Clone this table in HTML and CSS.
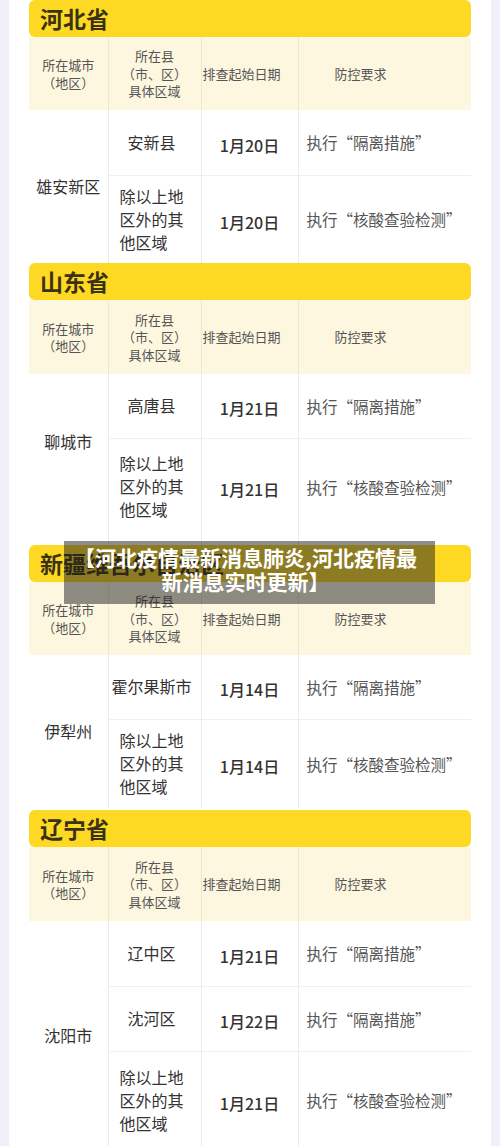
FILE: index.html
```html
<!DOCTYPE html>
<html lang="zh-CN">
<head>
<meta charset="utf-8">
<title>河北疫情最新消息</title>
<link rel="stylesheet" href="styles.css">
</head>
<body>
<div class="page">
  <div class="card">
    <section class="prov">
      <h2 class="prov-title">河北省</h2>
      <table class="grid">
        <colgroup><col class="c1"><col class="c2"><col class="c3"><col class="c4"></colgroup>
        <tr class="head h73">
          <th class="hc">所在城市<br>（地区）</th>
          <th class="hc">所在县<br>（市、区）<br>具体区域</th>
          <th class="hd">排查起始日期</th>
          <th class="hr">防控要求</th>
        </tr>
        <tr class="h65">
          <td class="city" rowspan="2">雄安新区</td>
          <td class="area"><span>安新县</span></td>
          <td class="date">1月20日</td>
          <td class="req">执行“隔离措施”</td>
        </tr>
        <tr class="h88 sep">
          <td class="area"><span>除以上地<br>区外的其<br>他区域</span></td>
          <td class="date">1月20日</td>
          <td class="req">执行“核酸查验检测”</td>
        </tr>
      </table>
    </section>

    <section class="prov">
      <h2 class="prov-title">山东省</h2>
      <table class="grid">
        <colgroup><col class="c1"><col class="c2"><col class="c3"><col class="c4"></colgroup>
        <tr class="head h74">
          <th class="hc">所在城市<br>（地区）</th>
          <th class="hc">所在县<br>（市、区）<br>具体区域</th>
          <th class="hd">排查起始日期</th>
          <th class="hr">防控要求</th>
        </tr>
        <tr class="h64">
          <td class="city lift" rowspan="2">聊城市</td>
          <td class="area"><span>高唐县</span></td>
          <td class="date">1月21日</td>
          <td class="req">执行“隔离措施”</td>
        </tr>
        <tr class="h107 sep tall">
          <td class="area"><span>除以上地<br>区外的其<br>他区域</span></td>
          <td class="date">1月21日</td>
          <td class="req">执行“核酸查验检测”</td>
        </tr>
      </table>
    </section>

    <section class="prov gap">
      <h2 class="prov-title">新疆维吾尔自治区</h2>
      <table class="grid">
        <colgroup><col class="c1"><col class="c2"><col class="c3"><col class="c4"></colgroup>
        <tr class="head h73">
          <th class="hc">所在城市<br>（地区）</th>
          <th class="hc">所在县<br>（市、区）<br>具体区域</th>
          <th class="hd">排查起始日期</th>
          <th class="hr">防控要求</th>
        </tr>
        <tr class="h64">
          <td class="city" rowspan="2">伊犁州</td>
          <td class="area"><span>霍尔果斯市</span></td>
          <td class="date">1月14日</td>
          <td class="req">执行“隔离措施”</td>
        </tr>
        <tr class="h89 sep">
          <td class="area"><span>除以上地<br>区外的其<br>他区域</span></td>
          <td class="date">1月14日</td>
          <td class="req">执行“核酸查验检测”</td>
        </tr>
      </table>
    </section>

    <section class="prov">
      <h2 class="prov-title">辽宁省</h2>
      <table class="grid">
        <colgroup><col class="c1"><col class="c2"><col class="c3"><col class="c4"></colgroup>
        <tr class="head h74">
          <th class="hc">所在城市<br>（地区）</th>
          <th class="hc">所在县<br>（市、区）<br>具体区域</th>
          <th class="hd">排查起始日期</th>
          <th class="hr">防控要求</th>
        </tr>
        <tr class="h65">
          <td class="city" rowspan="3">沈阳市</td>
          <td class="area"><span>辽中区</span></td>
          <td class="date">1月21日</td>
          <td class="req">执行“隔离措施”</td>
        </tr>
        <tr class="h65 sep">
          <td class="area"><span>沈河区</span></td>
          <td class="date">1月22日</td>
          <td class="req">执行“隔离措施”</td>
        </tr>
        <tr class="h98 sep">
          <td class="area"><span>除以上地<br>区外的其<br>他区域</span></td>
          <td class="date">1月21日</td>
          <td class="req">执行“核酸查验检测”</td>
        </tr>
      </table>
    </section>
  </div>

  <div class="caption">【河北疫情最新消息肺炎,河北疫情最<br>新消息实时更新】</div>
</div>
</body>
</html>
```

FILE: styles.css
```css
html, body {
  margin: 0;
  padding: 0;
}
body {
  background: #eff0fa;
  font-family: "Noto Sans CJK SC", "Noto Sans", sans-serif;
  color: #333;
}
.page {
  position: relative;
  width: 500px;
  height: 1146px;
  overflow: hidden;
}
.card {
  margin: 0 9px;
  background: #fff;
  padding: 0 20px;
  height: 1146px;
}
.prov {
  margin: 0;
}
.prov.gap {
  margin-bottom: 2px;
}
.prov-title {
  margin: 0;
  height: 37px;
  line-height: 37px;
  background: #fdd924;
  border-radius: 6px;
  padding-left: 11px;
  font-size: 23px;
  font-weight: 700;
  color: #3b3214;
  white-space: nowrap;
  overflow: hidden;
}
.grid {
  width: 442px;
  table-layout: fixed;
  border-collapse: collapse;
  border-spacing: 0;
}
.c1 { width: 79px; }
.c2 { width: 93px; }
.c3 { width: 97px; }
.c4 { width: 173px; }

.grid th, .grid td {
  padding: 0;
  vertical-align: middle;
  border-left: 1px solid #ebebeb;
}
.grid th:first-child, .grid td.city {
  border-left: none;
}
.head {
  background: #fdf7e0;
}
.grid .head th {
  font-size: 13px;
  font-weight: 400;
  line-height: 17.5px;
  color: #555;
  border-left-color: #efe8cf;
}
.grid .hc { text-align: center; }
.grid .hd { text-align: left; padding-left: 1px; white-space: nowrap; }
.grid .hr { text-align: left; padding-left: 36px; }

.h64 { height: 64px; }
.h65 { height: 65px; }
.h73 { height: 73px; }
.h74 { height: 74px; }
.h88 { height: 88px; }
.h89 { height: 89px; }
.h98 { height: 98px; }
.h107 { height: 107px; }

.grid .sep td {
  border-top: 1px solid #f0f0f0;
}
.grid .tall td {
  padding-bottom: 10px;
}
.grid .city {
  text-align: center;
  font-size: 16px;
  line-height: 23px;
  color: #333;
}
.grid .city.lift {
  padding-bottom: 36px;
}
.grid .area {
  text-align: center;
  font-size: 16px;
  line-height: 23px;
  color: #333;
  padding-right: 6px;
}
.area span {
  display: inline-block;
  text-align: left;
  white-space: nowrap;
}
.grid .date {
  text-align: center;
  font-size: 16px;
  font-weight: 500;
  color: #333;
  padding-top: 5px;
}
.grid .req {
  padding-left: 8px;
  font-size: 15.5px;
  color: #555;
  white-space: nowrap;
  font-feature-settings: "fwid";
}

.caption {
  position: absolute;
  left: 64px;
  top: 541px;
  width: 371px;
  height: 63px;
  box-sizing: border-box;
  padding-top: 4px;
  padding-right: 8px;
  background: rgba(30, 30, 30, 0.5);
  color: #fff;
  font-size: 21px;
  font-weight: 700;
  line-height: 24px;
  text-align: center;
  white-space: nowrap;
}
```
